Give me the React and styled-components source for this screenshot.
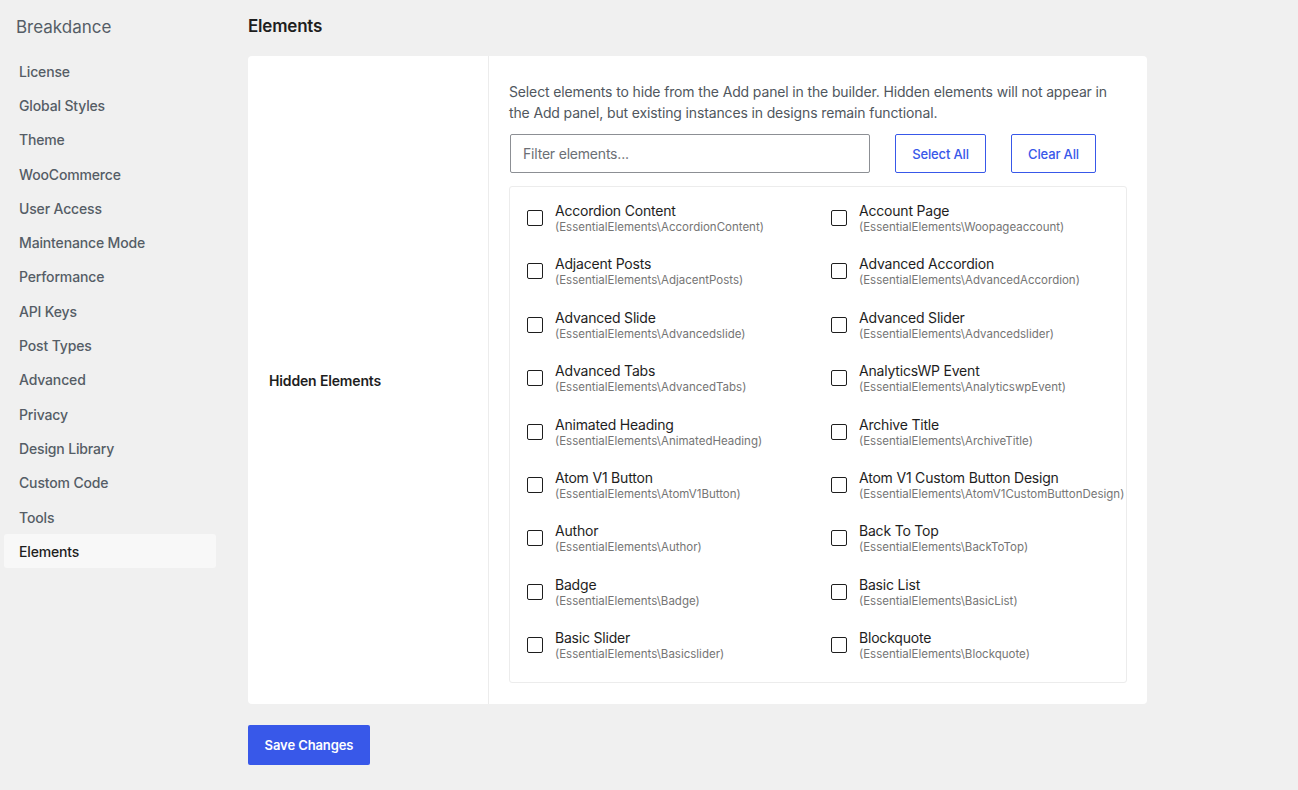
import React from "react";
import styled, { createGlobalStyle } from "styled-components";

const navItems = [
  "License",
  "Global Styles",
  "Theme",
  "WooCommerce",
  "User Access",
  "Maintenance Mode",
  "Performance",
  "API Keys",
  "Post Types",
  "Advanced",
  "Privacy",
  "Design Library",
  "Custom Code",
  "Tools",
  "Elements",
];

const elements = [
  ["Accordion Content", "AccordionContent"],
  ["Account Page", "Woopageaccount"],
  ["Adjacent Posts", "AdjacentPosts"],
  ["Advanced Accordion", "AdvancedAccordion"],
  ["Advanced Slide", "Advancedslide"],
  ["Advanced Slider", "Advancedslider"],
  ["Advanced Tabs", "AdvancedTabs"],
  ["AnalyticsWP Event", "AnalyticswpEvent"],
  ["Animated Heading", "AnimatedHeading"],
  ["Archive Title", "ArchiveTitle"],
  ["Atom V1 Button", "AtomV1Button"],
  ["Atom V1 Custom Button Design", "AtomV1CustomButtonDesign"],
  ["Author", "Author"],
  ["Back To Top", "BackToTop"],
  ["Badge", "Badge"],
  ["Basic List", "BasicList"],
  ["Basic Slider", "Basicslider"],
  ["Blockquote", "Blockquote"],
];

const GlobalStyle = createGlobalStyle`
  body {
    margin: 0;
    background: #f0f0f0;
    font-family: Inter, "Noto Sans", sans-serif;
    color: #1e1e1e;
  }
`;

const Page = styled.div`
  display: flex;
  min-height: 790px;
`;

const Sidebar = styled.aside`
  width: 220px;
  flex: none;
  padding: 0 4px;
  box-sizing: border-box;
`;

const Brand = styled.div`
  font-size: 17px;
  color: #555d66;
  height: 54px;
  line-height: 54px;
  padding-left: 12px;
`;

const NavList = styled.nav`
  display: flex;
  flex-direction: column;
`;

const NavItem = styled.a`
  display: flex;
  align-items: center;
  height: 34.3px;
  padding: 0 15px;
  font-size: 14px;
  font-weight: 500;
  letter-spacing: -0.15px;
  border-radius: 3px;
  color: ${(p) => (p.active ? "#1e1e1e" : "#555d66")};
  background: ${(p) => (p.active ? "#f8f8f8" : "transparent")};
`;

const Main = styled.main`
  flex: 1;
  padding-left: 28px;
`;

const Title = styled.h1`
  margin: 0;
  height: 56px;
  line-height: 52px;
  font-size: 17px;
  font-weight: 600;
  letter-spacing: -0.2px;
  color: #1e1e1e;
`;

const Card = styled.section`
  width: 899px;
  display: flex;
  background: #fff;
  border-radius: 4px;
`;

const LabelCell = styled.div`
  width: 241px;
  flex: none;
  border-right: 1px solid #ececec;
  display: flex;
  align-items: center;
  padding-left: 21px;
  box-sizing: border-box;
  font-size: 14px;
  font-weight: 600;
  letter-spacing: -0.15px;
  color: #1e1e1e;
`;

const FieldCell = styled.div`
  flex: 1;
  min-width: 0;
  padding: 25px 20px 21px 20px;
`;

const Description = styled.p`
  margin: 0 0 11px;
  font-size: 14px;
  line-height: 21px;
  letter-spacing: -0.14px;
  color: #50575e;
`;

const Controls = styled.div`
  display: flex;
  gap: 25px;
  padding-left: 1px;
  margin-bottom: 13px;
`;

const FilterInput = styled.input`
  width: 360px;
  height: 39px;
  box-sizing: border-box;
  border: 1px solid #8c8f94;
  border-radius: 2px;
  padding: 0 12px;
  font-family: Inter, sans-serif;
  font-size: 14px;
  letter-spacing: -0.2px;
  color: #1e1e1e;
  outline: none;
  &::placeholder {
    color: #6b6f75;
  }
`;

const OutlineButton = styled.button`
  height: 39px;
  width: ${(p) => p.w}px;
  padding: 0;
  background: #fff;
  border: 1px solid #3858e9;
  border-radius: 2px;
  color: #3858e9;
  font-family: Inter, sans-serif;
  font-size: 13px;
  font-weight: 500;
  letter-spacing: -0.15px;
`;

const ElementList = styled.div`
  border: 1px solid #ececec;
  border-radius: 3px;
  padding: 15px 0 21px 17px;
  display: grid;
  grid-template-columns: 304px 304px;
  row-gap: 20.4px;
  overflow: hidden;
  height: 497px;
  box-sizing: border-box;
`;

const ElementRow = styled.label`
  display: flex;
  gap: 12px;
  align-items: flex-start;
  white-space: nowrap;
`;

const Box = styled.span`
  width: 16px;
  height: 16px;
  margin-top: 8px;
  flex: none;
  box-sizing: border-box;
  border: 1.5px solid #1e1e1e;
  border-radius: 2px;
  background: #fff;
`;

const ElementText = styled.span`
  display: flex;
  flex-direction: column;
`;

const ElementName = styled.span`
  font-size: 14px;
  line-height: 17px;
  letter-spacing: -0.2px;
  color: #1e1e1e;
`;

const ElementClass = styled.span`
  font-size: 11.5px;
  line-height: 16px;
  letter-spacing: 0;
  color: #757575;
`;

const SaveButton = styled.button`
  margin-top: 21px;
  width: 122px;
  height: 40px;
  background: #3858e9;
  color: #fff;
  border: none;
  border-radius: 2px;
  font-family: Inter, sans-serif;
  font-size: 13px;
  font-weight: 600;
  letter-spacing: -0.1px;
`;

export default function App() {
  return (
    <>
      <GlobalStyle />
      <Page>
        <Sidebar>
          <Brand>Breakdance</Brand>
          <NavList>
            {navItems.map((item) => (
              <NavItem key={item} active={item === "Elements"}>
                {item}
              </NavItem>
            ))}
          </NavList>
        </Sidebar>
        <Main>
          <Title>Elements</Title>
          <Card>
            <LabelCell>Hidden Elements</LabelCell>
            <FieldCell>
              <Description>
                Select elements to hide from the Add panel in the builder. Hidden elements will not
                appear in the Add panel, but existing instances in designs remain functional.
              </Description>
              <Controls>
                <FilterInput placeholder="Filter elements..." />
                <OutlineButton w={91}>Select All</OutlineButton>
                <OutlineButton w={85}>Clear All</OutlineButton>
              </Controls>
              <ElementList>
                {elements.map(([name, cls]) => (
                  <ElementRow key={cls}>
                    <Box />
                    <ElementText>
                      <ElementName>{name}</ElementName>
                      <ElementClass>(EssentialElements\{cls})</ElementClass>
                    </ElementText>
                  </ElementRow>
                ))}
              </ElementList>
            </FieldCell>
          </Card>
          <SaveButton>Save Changes</SaveButton>
        </Main>
      </Page>
    </>
  );
}
